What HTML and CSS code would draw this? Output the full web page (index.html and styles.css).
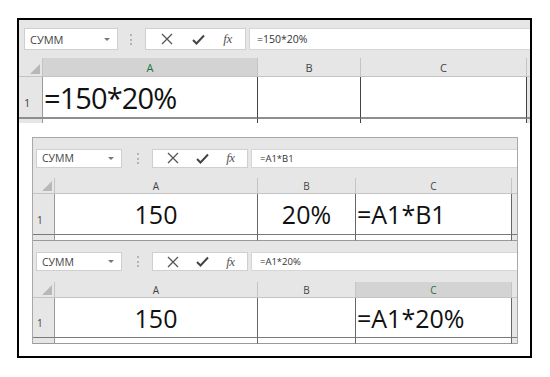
FILE: index.html
```html
<!DOCTYPE html>
<html>
<head>
<meta charset="utf-8">
<link rel="stylesheet" href="styles.css">
</head>
<body>
<div class="frame">
  <div class="xl big">
    <div class="bar">
      <div class="namebox"><span>СУММ</span><span class="caret"></span></div>
      <div class="dots"></div>
      <div class="btns">
        <svg class="ico" width="12" height="12" viewBox="0 0 12 12"><path d="M1 1L11 11M11 1L1 11" stroke="#555" stroke-width="1.3" fill="none"/></svg>
        <svg class="ico" width="13" height="11" viewBox="0 0 13 11"><path d="M1 6L4.5 9.5L12 1.5" stroke="#444" stroke-width="2" fill="none"/></svg>
        <span class="fx">fx</span>
      </div>
      <div class="formula">=150*20%</div>
    </div>
    <div class="sheet">
      <div class="corner"><span class="tri"></span></div>
      <div class="ch sel">A</div>
      <div class="ch">B</div>
      <div class="ch">C</div>
      <div class="ch rest"></div>
      <div class="rh">1</div>
      <div class="cell left">=150*20%</div>
      <div class="cell"></div>
      <div class="cell"></div>
      <div class="rest-c"></div>
      <div class="rh strip"></div>
      <div class="cell strip"></div>
      <div class="cell strip"></div>
      <div class="cell strip"></div>
      <div class="rest-c strip"></div>
    </div>
  </div>

  <div class="shot">
    <div class="xl small">
      <div class="bar">
        <div class="namebox"><span>СУММ</span><span class="caret"></span></div>
        <div class="dots"></div>
        <div class="btns">
          <svg class="ico" width="12" height="12" viewBox="0 0 12 12"><path d="M1 1L11 11M11 1L1 11" stroke="#555" stroke-width="1.3" fill="none"/></svg>
          <svg class="ico" width="13" height="11" viewBox="0 0 13 11"><path d="M1 6L4.5 9.5L12 1.5" stroke="#444" stroke-width="2" fill="none"/></svg>
          <span class="fx">fx</span>
        </div>
        <div class="formula">=A1*B1</div>
      </div>
      <div class="sheet">
        <div class="corner"><span class="tri"></span></div>
        <div class="ch">A</div>
        <div class="ch">B</div>
        <div class="ch">C</div>
        <div class="ch rest"></div>
        <div class="rh">1</div>
        <div class="cell center">150</div>
        <div class="cell center">20%</div>
        <div class="cell left">=A1*B1</div>
        <div class="rest-c"></div>
        <div class="rh strip"></div>
        <div class="cell strip"></div>
        <div class="cell strip"></div>
        <div class="cell strip"></div>
        <div class="rest-c strip"></div>
      </div>
    </div>
    <div class="xl small second">
      <div class="bar">
        <div class="namebox"><span>СУММ</span><span class="caret"></span></div>
        <div class="dots"></div>
        <div class="btns">
          <svg class="ico" width="12" height="12" viewBox="0 0 12 12"><path d="M1 1L11 11M11 1L1 11" stroke="#555" stroke-width="1.3" fill="none"/></svg>
          <svg class="ico" width="13" height="11" viewBox="0 0 13 11"><path d="M1 6L4.5 9.5L12 1.5" stroke="#444" stroke-width="2" fill="none"/></svg>
          <span class="fx">fx</span>
        </div>
        <div class="formula">=A1*20%</div>
      </div>
      <div class="sheet">
        <div class="corner"><span class="tri"></span></div>
        <div class="ch">A</div>
        <div class="ch">B</div>
        <div class="ch sel">C</div>
        <div class="ch rest"></div>
        <div class="rh">1</div>
        <div class="cell center">150</div>
        <div class="cell"></div>
        <div class="cell left">=A1*20%</div>
        <div class="rest-c"></div>
        <div class="rh strip"></div>
        <div class="cell strip"></div>
        <div class="cell strip"></div>
        <div class="cell strip"></div>
        <div class="rest-c strip"></div>
      </div>
    </div>
  </div>
</div>
</body>
</html>
```

FILE: styles.css
```css
html, body {
  margin: 0;
  padding: 0;
  background: #fff;
}
body {
  font-family: "Open Sans", "Noto Sans", sans-serif;
}
.frame {
  margin: 18px 0 0 17px;
  width: 515px;
  height: 340px;
  border: 2px solid #000;
  box-sizing: border-box;
  display: flex;
  flex-direction: column;
  align-items: flex-start;
}
.xl {
  width: 100%;
}
.bar {
  background: #e6e6e6;
  display: flex;
  align-items: center;
  box-sizing: border-box;
}
.namebox {
  background: #fff;
  border: 1px solid #cfcfcf;
  box-sizing: border-box;
  display: flex;
  align-items: center;
  justify-content: space-between;
  color: #444;
  font-size: 11px;
  padding: 0 7px 0 5px;
}
.caret {
  width: 0;
  height: 0;
  border-left: 3px solid transparent;
  border-right: 3px solid transparent;
  border-top: 3px solid #777;
}
.dots {
  width: 0;
  border-left: 2px dotted #b4b4b4;
  height: 11px;
}
.btns {
  background: #fff;
  border: 1px solid #cfcfcf;
  box-sizing: border-box;
  display: flex;
  align-items: center;
  justify-content: space-around;
  padding: 0 4px 0 6px;
}
.fx {
  font-family: "Liberation Serif", serif;
  font-style: italic;
  font-size: 13px;
  color: #555;
  letter-spacing: -0.5px;
}
.formula {
  flex: 1;
  background: #fff;
  border: 1px solid #d6d6d6;
  border-right: none;
  box-sizing: border-box;
  display: flex;
  align-items: center;
  color: #333;
  font-size: 10.5px;
}
.sheet {
  display: grid;
}
.corner {
  background: #e6e6e6;
  border-right: 1px solid #c4c4c4;
  border-bottom: 1px solid #c4c4c4;
  box-sizing: border-box;
  position: relative;
}
.tri {
  position: absolute;
  right: 2px;
  bottom: 2px;
  width: 0;
  height: 0;
  border-left: 10px solid transparent;
  border-bottom: 10px solid #b8b8b8;
}
.ch {
  background: #e6e6e6;
  border-right: 1px solid #c4c4c4;
  border-bottom: 1px solid #c4c4c4;
  box-sizing: border-box;
  display: flex;
  align-items: center;
  justify-content: center;
  color: #444;
  font-size: 11px;
}
.ch.sel {
  background: #d3d3d3;
  color: #217346;
}
.ch.rest {
  border-right: none;
}
.rh {
  background: #e6e6e6;
  border-right: 1px solid #9a9a9a;
  border-bottom: 2px solid #8e8e8e;
  box-sizing: border-box;
  color: #444;
  font-size: 11px;
  display: flex;
  align-items: flex-end;
  padding: 0 0 7px 5px;
}
.cell {
  background: #fff;
  border-right: 1px solid #444;
  border-bottom: 2px solid #8e8e8e;
  box-sizing: border-box;
  display: flex;
  align-items: center;
  color: #111;
  white-space: nowrap;
  overflow: hidden;
}
.cell.left {
  justify-content: flex-start;
  padding-left: 1px;
}
.cell.center {
  justify-content: center;
}
.rest-c {
  background: #e6e6e6;
  border-bottom: 2px solid #8e8e8e;
  box-sizing: border-box;
}
.strip {
  border-bottom: none;
  padding: 0;
}

/* big (top) screenshot */
.big .bar {
  height: 38px;
  padding: 0 0 0 5px;
}
.big .namebox {
  width: 94px;
  height: 22px;
}
.big .dots {
  margin: 0 13px 0 12px;
}
.big .btns {
  width: 101px;
  height: 22px;
}
.big .formula {
  height: 22px;
  margin-left: 3px;
  padding-left: 7px;
}
.big .sheet {
  grid-template-columns: 24px 215px 103px 166px 3px;
  grid-template-rows: 19px 42px 4px;
}
.big .cell {
  font-size: 29px;
  letter-spacing: -0.9px;
}

/* second screenshot */
.shot {
  margin: 14px 0 0 13px;
  width: 486px;
  border: 1px solid #a8a8a8;
  border-bottom: none;
  box-sizing: border-box;
}
.small .bar {
  height: 40px;
  padding: 0 0 0 3px;
}
.small.second .bar {
  height: 41px;
}
.small .namebox {
  width: 86px;
  height: 19px;
  font-size: 10.5px;
}
.small .dots {
  margin: 0 13px 0 15px;
}
.small .btns {
  width: 96px;
  height: 19px;
}
.small .formula {
  height: 19px;
  margin-left: 3px;
  padding-left: 8px;
  font-size: 9.5px;
}
.small .ch {
  font-size: 10px;
}
.small .rh {
  font-size: 10px;
  border-bottom: 1px solid #7a7a7a;
  padding-left: 4px;
}
.small .cell {
  font-size: 25px;
  border-bottom: 1px solid #7a7a7a;
  border-right: 1px solid #666;
}
.small .rest-c {
  border-bottom: 1px solid #7a7a7a;
}
.small .strip {
  border-bottom: 1px solid #9a9a9a;
}
.small .sheet {
  grid-template-columns: 22px 203px 98px 156px 5px;
  grid-template-rows: 16px 41px 6px;
}
.small.second .sheet {
  grid-template-rows: 16px 40px 6px;
}
```
